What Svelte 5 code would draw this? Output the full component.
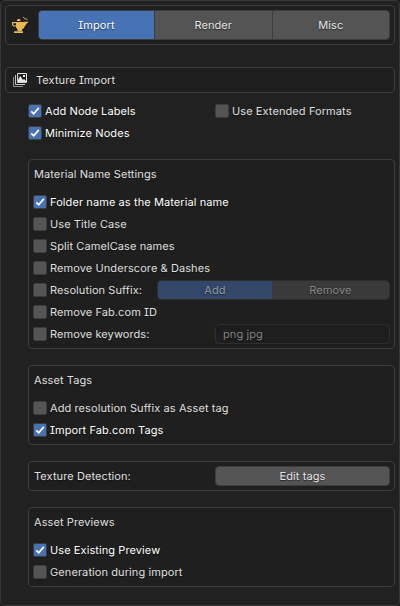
<script>
  let tab = $state('Import');
  let options = $state({
    labels: true, minimize: true, extended: false,
    folder: true, title: false, camel: false, underscore: false,
    suffix: false, fab: false, keywords: false,
    assetSuffix: false, fabTags: true, existing: true, generate: false
  });
</script>

{#snippet check(key, label)}
  <button class="check" class:on={options[key]} role="checkbox" aria-checked={options[key]} onclick={() => (options[key] = !options[key])}>
    <span class="mark">
      {#if options[key]}
        <svg width="12" height="12" viewBox="0 0 12 12"><path d="M2.3 6.3 4.7 8.8 9.8 2.9" fill="none" stroke="#fff" stroke-width="1.7" /></svg>
      {/if}
    </span>
    <span class="label">{label}</span>
  </button>
{/snippet}

<main>
  <header class="box">
    <svg class="lamp" width="16" height="16" viewBox="0 0 16 16" fill="#edb753">
      <path d="M5 3.900V3l1-1h1.500l1 1v.9z" />
      <path d="M0 5h11l2-.3h3V6h-1l-2 3-1.500 2.500L10 12.300H5.500L4 10.500V9.500H1.500L0 8zM1.200 6.200V7.700l.8.8h2V6.200z" fill-rule="evenodd" />
      <path d="M5.500 12h4.500v2H5.500zM2 14.200h9V16H2z" />
      <path d="M11 .5h1l1 1.500h1.700l1 1.300" fill="none" stroke="#c99b4a" stroke-width="1" />
    </svg>
    <div class="segments tabs">
      {#each ['Import', 'Render', 'Misc'] as name}
        <button class:active={tab === name} onclick={() => (tab = name)}>{name}</button>
      {/each}
    </div>
  </header>

  <h1 class="box">
    <svg width="16" height="16" viewBox="0 0 16 16">
      <path d="M1.500 5v9.500H11" fill="none" stroke="#8e8e8e" />
      <path d="M3.500 3v9.500H13" fill="none" stroke="#c4c4c4" />
      <path d="M5.600 1.500h8.900v8.900H5.600z" fill="none" stroke="#e6e6e6" />
      <path d="M6 10V8l2.200-4L11 8l1-1 2 2v1zM11 3h2v2h-2z" fill="#e6e6e6" />
    </svg>
    <span>Texture Import</span>
  </h1>

  <div class="content">
    <div class="columns">
      <div>{@render check('labels', 'Add Node Labels')}{@render check('minimize', 'Minimize Nodes')}</div>
      <div>{@render check('extended', 'Use Extended Formats')}</div>
    </div>

    <section class="box">
      <h2>Material Name Settings</h2>
      {@render check('folder', 'Folder name as the Material name')}
      {@render check('title', 'Use Title Case')}
      {@render check('camel', 'Split CamelCase names')}
      {@render check('underscore', 'Remove Underscore & Dashes')}
      <div class="row">
        {@render check('suffix', 'Resolution Suffix:')}
        <div class="segments suffix"><button class="active" disabled>Add</button><button disabled>Remove</button></div>
      </div>
      {@render check('fab', 'Remove Fab.com ID')}
      <div class="row">
        {@render check('keywords', 'Remove keywords:')}
        <input value="png jpg" disabled />
      </div>
    </section>

    <section class="box">
      <h2>Asset Tags</h2>
      {@render check('assetSuffix', 'Add resolution Suffix as Asset tag')}
      {@render check('fabTags', 'Import Fab.com Tags')}
    </section>

    <section class="box single">
      <span>Texture Detection:</span>
      <button class="edit">Edit tags</button>
    </section>

    <section class="box">
      <h2>Asset Previews</h2>
      {@render check('existing', 'Use Existing Preview')}
      {@render check('generate', 'Generation during import')}
    </section>
  </div>
</main>

<style>
  :global(body) { margin: 0; background: #1b1b1b; }
  * { box-sizing: border-box; }
  main {
    width: 400px; height: 606px; padding: 4px 4px 0; overflow: hidden;
    background: #212121; border: 1px solid #383838; border-radius: 5px;
    color: #e0e0e0; font: 11px/20px Inter, sans-serif; letter-spacing: .09px;
    text-rendering: geometricPrecision;
    font-feature-settings: "cv08"; text-shadow: 0 1px 1px #0009;
  }
  button, input { font: inherit; letter-spacing: inherit; font-feature-settings: inherit; text-rendering: inherit; text-shadow: inherit; color: inherit; margin: 0; padding: 0; border: 0; background: none; }
  .box { border: 1px solid #3d3d3d; border-radius: 4px; background: #1f1f1f; }
  header { height: 40px; display: flex; align-items: center; padding: 0 4px 0 6px; }
  .lamp { margin-right: 10px; flex: none; }
  .segments { display: flex; border: 1px solid #3d3d3d; border-radius: 4px; overflow: hidden; }
  .segments button { flex: 1; background: #545454; color: #e6e6e6; }
  .tabs { flex: 1; height: 30px; }
  .tabs button:first-child { flex: 0 0 115px; }
  .segments button + button { border-left: 1px solid #3d3d3d; }
  .segments button.active { background: #4772b3; color: #fff; }
  h1 { height: 26px; margin: 22px 0 0; padding: 0 6px; display: flex; align-items: center; gap: 8px; font-size: inherit; font-weight: 400; }
  .content { padding-left: 23px; display: flex; flex-direction: column; }
  .columns { display: grid; grid-template-columns: 187px 1fr; height: 44px; margin: 7px 0 15px; }
  .check { display: flex; align-items: center; height: 22px; gap: 3px; text-align: left; white-space: nowrap; }
  .check.on { color: #fff; }
  .mark { width: 14px; height: 14px; flex: none; border: 1px solid #3d3d3d; border-radius: 2px; background: #545454; }
  .mark svg { display: block; }
  .on .mark { background: #4772b3; }
  section { padding: 4px 4px 3px; margin-bottom: 16px; }
  h2 { margin: 0 0 7px; padding-left: 1px; height: 20px; font-size: inherit; font-weight: 400; }
  .row { display: flex; justify-content: space-between; align-items: center; height: 22px; }
  .suffix { width: 233px; height: 20px; border-color: #2e2e2e; }
  .suffix button { background: #3a3a3a; color: #8b8b8b; line-height: 18px; }
  .suffix button:first-child { flex: 0 0 114px; }
  .suffix button + button { border-left: 0; }
  .suffix button.active { background: #334869; color: #939ba8; }
  input { width: 175px; height: 20px; padding: 0 7px; border: 1px solid #2e2e2e; border-radius: 4px; background: #1e1e1e; color: #858585; }
  .single { display: flex; justify-content: space-between; height: 30px; padding: 4px; }
  .single span { padding-left: 1px; }
  .edit { width: 175px; height: 20px; border: 1px solid #3d3d3d; border-radius: 4px; background: #545454; color: #e6e6e6; line-height: 18px; }
</style>
